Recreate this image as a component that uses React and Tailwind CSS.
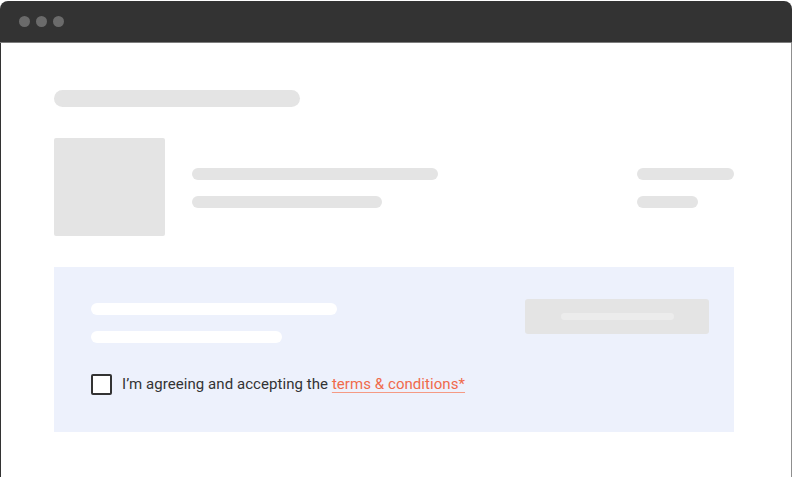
export default function App() {
  return (
    <div className="w-[793px] h-[477px] bg-white overflow-hidden" style={{ fontFamily: "Roboto, 'Liberation Sans', sans-serif" }}>
      <div className="pt-px w-[792px] h-[477px] flex flex-col">
        <div className="h-[41px] bg-[#333333] rounded-t-[8px] flex items-center gap-[6px] pl-[19px] shrink-0">
          <div className="w-[11px] h-[11px] rounded-full bg-[#6b6b6b]" />
          <div className="w-[11px] h-[11px] rounded-full bg-[#6b6b6b]" />
          <div className="w-[11px] h-[11px] rounded-full bg-[#6b6b6b]" />
        </div>
        <div className="h-px bg-[#7d7d7d] shrink-0" />
        <div className="flex-1 border-l border-[#333333] border-r border-r-[#8f8f8f] pl-[53px] pt-[47px]">
          <div className="w-[246px] h-[17px] rounded-full bg-[#e4e4e4]" />
          <div className="mt-[31px] flex w-[680px]">
            <div className="w-[111px] h-[98px] rounded-[2px] bg-[#e4e4e4]" />
            <div className="ml-[27px] pt-[30px] flex flex-col gap-[16px]">
              <div className="w-[246px] h-[12px] rounded-full bg-[#e4e4e4]" />
              <div className="w-[190px] h-[12px] rounded-full bg-[#e4e4e4]" />
            </div>
            <div className="ml-auto pt-[30px] flex flex-col gap-[16px]">
              <div className="w-[97px] h-[12px] rounded-full bg-[#e4e4e4]" />
              <div className="w-[61px] h-[12px] rounded-full bg-[#e4e4e4]" />
            </div>
          </div>
          <div className="mt-[31px] w-[680px] h-[165px] bg-[#edf1fc] flex justify-between pl-[37px] pr-[25px] pt-[32px]">
            <div className="pt-[4px] flex flex-col">
              <div className="w-[246px] h-[12px] rounded-full bg-white" />
              <div className="mt-[16px] w-[191px] h-[12px] rounded-full bg-white" />
              <div className="mt-[31px] flex items-center gap-[10px]">
                <div className="w-[21px] h-[21px] rounded-[2px] border-2 border-[#333333] bg-white" />
                <div className="text-[15px] leading-[20px] tracking-[0.06px] text-[#333333] whitespace-nowrap -mt-[2px]">
                  I’m agreeing and accepting the{" "}
                  <span className="text-[#f06a4b] underline decoration-[#f59a84] underline-offset-[3px]">terms &amp; conditions*</span>
                </div>
              </div>
            </div>
            <div className="w-[184px] h-[35px] rounded-[3px] bg-[#e4e4e4] flex items-center justify-center">
              <div className="w-[113px] h-[7px] rounded-full bg-[#ececec]" />
            </div>
          </div>
        </div>
      </div>
    </div>
  );
}
